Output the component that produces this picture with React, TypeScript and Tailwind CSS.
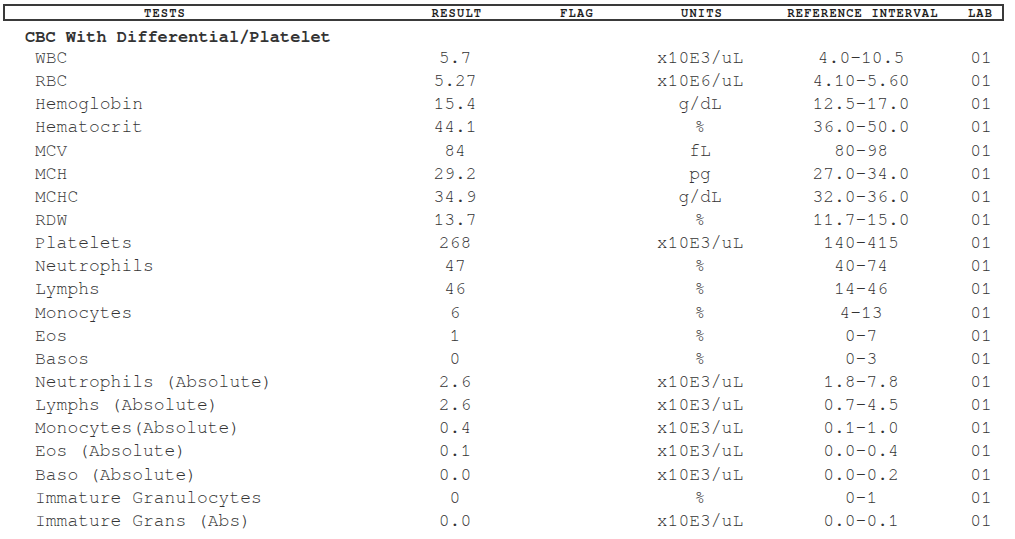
import React from "react";

type Row = [string, string, string, string, string];

const rows: Row[] = [
  ["WBC", "5.7", "x10E3/uL", "4.0-10.5", "01"],
  ["RBC", "5.27", "x10E6/uL", "4.10-5.60", "01"],
  ["Hemoglobin", "15.4", "g/dL", "12.5-17.0", "01"],
  ["Hematocrit", "44.1", "%", "36.0-50.0", "01"],
  ["MCV", "84", "fL", "80-98", "01"],
  ["MCH", "29.2", "pg", "27.0-34.0", "01"],
  ["MCHC", "34.9", "g/dL", "32.0-36.0", "01"],
  ["RDW", "13.7", "%", "11.7-15.0", "01"],
  ["Platelets", "268", "x10E3/uL", "140-415", "01"],
  ["Neutrophils", "47", "%", "40-74", "01"],
  ["Lymphs", "46", "%", "14-46", "01"],
  ["Monocytes", "6", "%", "4-13", "01"],
  ["Eos", "1", "%", "0-7", "01"],
  ["Basos", "0", "%", "0-3", "01"],
  ["Neutrophils (Absolute)", "2.6", "x10E3/uL", "1.8-7.8", "01"],
  ["Lymphs (Absolute)", "2.6", "x10E3/uL", "0.7-4.5", "01"],
  ["Monocytes(Absolute)", "0.4", "x10E3/uL", "0.1-1.0", "01"],
  ["Eos (Absolute)", "0.1", "x10E3/uL", "0.0-0.4", "01"],
  ["Baso (Absolute)", "0.0", "x10E3/uL", "0.0-0.2", "01"],
  ["Immature Granulocytes", "0", "%", "0-1", "01"],
  ["Immature Grans (Abs)", "0.0", "x10E3/uL", "0.0-0.1", "01"],
];

export default function App() {
  return (
    <div
      className="w-[1015px] h-[539px] bg-white overflow-hidden pt-[4px]"
      style={{ fontFamily: '"Nimbus Mono PS", "FreeMono", "Liberation Mono", "Courier New", monospace' }}
    >
      <div className="ml-[3px] w-[1001px] h-[17px] border-2 border-[#3a3a3a] grid grid-cols-[392px_120px_120px_130px_192px_43px] items-center text-[12px] font-bold tracking-[1.2px] text-[#1f1f1f] leading-none">
        <div className="text-center pr-[72px]">TESTS</div>
        <div className="text-center">RESULT</div>
        <div className="text-center">FLAG</div>
        <div className="text-center">UNITS</div>
        <div className="text-center">REFERENCE INTERVAL</div>
        <div className="text-center">LAB</div>
      </div>
      <div className="mt-[6px] h-[20px] pl-[25px] text-[17px] leading-[20px] font-bold text-[#333333] whitespace-pre">
        CBC With Differential/Platelet
      </div>
      <div className="flex flex-col">
        {rows.map((r, i) => (
          <div
            key={i}
            className="grid grid-cols-[395px_120px_120px_130px_192px_48px] h-[23.15px] items-center text-[18px] leading-[23px] text-[#333333] whitespace-pre"
          >
            <div className="pl-[35px]">{r[0]}</div>
            <div className="text-center">{r[1]}</div>
            <div className="text-center"></div>
            <div className="text-center">{r[2]}</div>
            <div className="text-center">{r[3]}</div>
            <div className="text-center">{r[4]}</div>
          </div>
        ))}
      </div>
    </div>
  );
}
